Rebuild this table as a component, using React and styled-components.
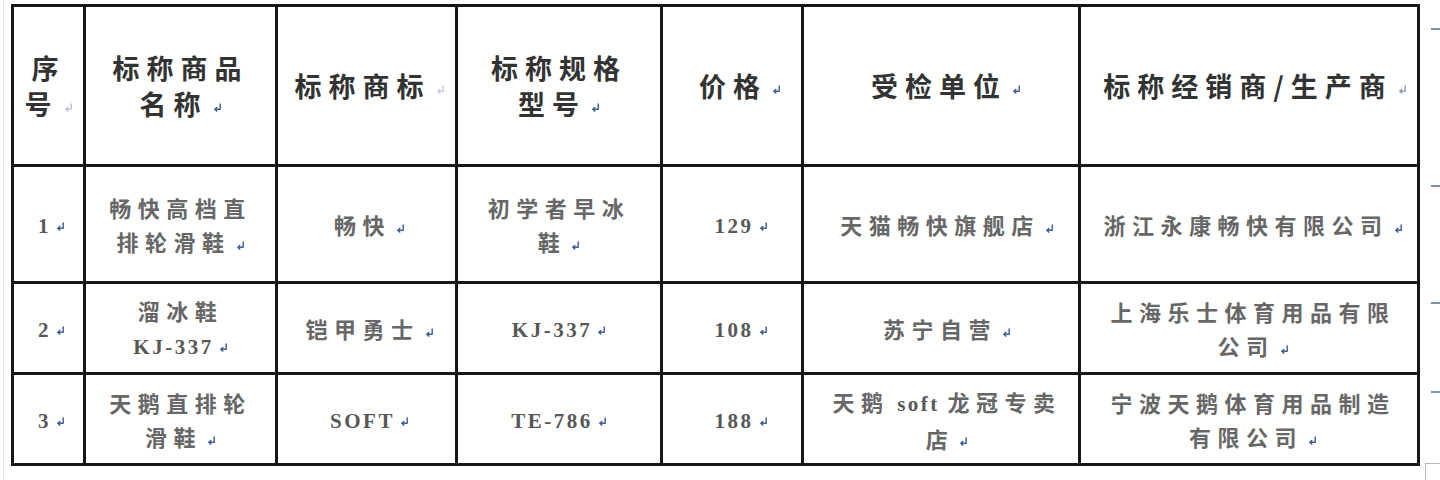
import React from "react";
import styled, { createGlobalStyle } from "styled-components";

const Global = createGlobalStyle`
  html, body { margin: 0; padding: 0; background: #fff; }
  #root { width: 1440px; height: 480px; }
`;

const Page = styled.div`
  display: flex;
  width: 1440px;
  height: 480px;
  background: #fff;
  overflow: hidden;
`;

const LeftRule = styled.div`
  width: 1px;
  margin-left: 3px;
  margin-right: 7px;
  background: #e3e3e3;
  align-self: stretch;
`;

const Sheet = styled.div`
  padding-top: 4px;
`;

const Grid = styled.div`
  display: grid;
  grid-template-columns: 69px 189px 177px 202px 138px 274px 336px;
  grid-template-rows: 157px 114px 88px 88px;
  gap: 3px;
  padding: 3px;
  background: #161616;
  width: max-content;
`;

const Cell = styled.div`
  background: #fff;
  display: flex;
  align-items: center;
  justify-content: center;
  text-align: center;
  overflow: visible;
  padding-left: ${(p) => p.$pl || 0}px;
`;

const HeadText = styled.div`
  font-family: "Noto Sans CJK SC", "Noto Sans", sans-serif;
  font-weight: 700;
  font-size: 27px;
  letter-spacing: 7px;
  line-height: 36px;
  color: #333;
  white-space: nowrap;
`;

const BodyText = styled.div`
  font-family: "Noto Sans CJK SC", "Noto Sans", sans-serif;
  font-weight: 700;
  font-size: 22px;
  letter-spacing: 6.5px;
  line-height: 34px;
  color: #676767;
  white-space: nowrap;
`;

const Lat = styled.span`
  font-family: "Liberation Serif", serif;
  font-weight: 700;
  font-size: 21px;
  letter-spacing: 2.5px;
  color: #585858;
`;

const MarkSvg = styled.svg`
  display: inline-block;
  width: 9px;
  height: 9px;
  margin-left: ${(p) => p.$ml ?? 5}px;
  vertical-align: middle;
  opacity: ${(p) => p.$op ?? 1};
`;

const Mark = ({ op, ml }) => (
  <MarkSvg viewBox="0 0 10 10" $op={op} $ml={ml}>
    <path
      d="M8 1 V7 H2 M4.2 5 L2 7 L4.2 9"
      fill="none"
      stroke="#3e5f98"
      strokeWidth="1.6"
      strokeLinecap="round"
      strokeLinejoin="round"
    />
  </MarkSvg>
);

const MarginCol = styled.div`
  width: 20px;
  padding-top: 4px;
  display: flex;
  flex-direction: column;
`;

const MarginRow = styled.div`
  height: ${(p) => p.$h}px;
`;

const Tick = styled.div`
  margin-top: ${(p) => p.$top}px;
  margin-left: 11px;
  width: 9px;
  height: 2px;
  background: #7f8fab;
`;

const CornerBox = styled.div`
  margin-top: 2px;
  margin-left: 5px;
  height: 16px;
  border-top: 1px solid #b9b9b9;
  border-left: 1px solid #b9b9b9;
`;

const headers = [
  { lines: ["序", "号"], mark: 0.35, pl: 0 },
  { lines: ["标称商品", "名称"], mark: 1, pl: 0 },
  { lines: ["标称商标"], mark: 0.3, pl: 6 },
  { lines: ["标称规格", "型号"], mark: 1, pl: 0 },
  { lines: ["价格"], mark: 1, pl: 16 },
  { lines: ["受检单位"], mark: 1, pl: 10 },
  { lines: ["标称经销商/生产商"], mark: 0.6, pl: 12 },
];

const L = (t) => <Lat>{t}</Lat>;

const rows = [
  [
    [L("1")],
    ["畅快高档直", "排轮滑鞋"],
    ["畅快"],
    ["初学者早冰", "鞋"],
    [L("129")],
    ["天猫畅快旗舰店"],
    ["浙江永康畅快有限公司"],
  ],
  [
    [L("2")],
    ["溜冰鞋", L("KJ-337")],
    ["铠甲勇士"],
    [L("KJ-337")],
    [L("108")],
    ["苏宁自营"],
    ["上海乐士体育用品有限", "公司"],
  ],
  [
    [L("3")],
    ["天鹅直排轮", "滑鞋"],
    [L("SOFT")],
    [L("TE-786")],
    [L("188")],
    [
      <>
        天鹅<Lat> soft </Lat>龙冠专卖
      </>,
      "店",
    ],
    ["宁波天鹅体育用品制造", "有限公司"],
  ],
];

const bodyPad = [6, 0, 6, 0, 18, 12, 8];

export default function App() {
  return (
    <Page>
      <Global />
      <LeftRule />
      <Sheet>
        <Grid>
          {headers.map((h, i) => (
            <Cell key={"h" + i} $pl={h.pl}>
              <HeadText>
                {h.lines.map((ln, j) => (
                  <div key={j}>
                    {ln}
                    {j === h.lines.length - 1 && <Mark op={h.mark} />}
                  </div>
                ))}
              </HeadText>
            </Cell>
          ))}
          {rows.map((r, ri) =>
            r.map((lines, ci) => (
              <Cell key={ri + "-" + ci} $pl={bodyPad[ci]}>
                <BodyText>
                  {lines.map((ln, j) => (
                    <div key={j}>
                      {ln}
                      {j === lines.length - 1 && <Mark />}
                    </div>
                  ))}
                </BodyText>
              </Cell>
            ))
          )}
        </Grid>
      </Sheet>
      <MarginCol>
        <MarginRow $h={160}>
          <Tick $top={24} />
        </MarginRow>
        <MarginRow $h={117}>
          <Tick $top={22} />
        </MarginRow>
        <MarginRow $h={91}>
          <Tick $top={22} />
        </MarginRow>
        <MarginRow $h={91}>
          <Tick $top={21} />
        </MarginRow>
        <CornerBox />
      </MarginCol>
    </Page>
  );
}
